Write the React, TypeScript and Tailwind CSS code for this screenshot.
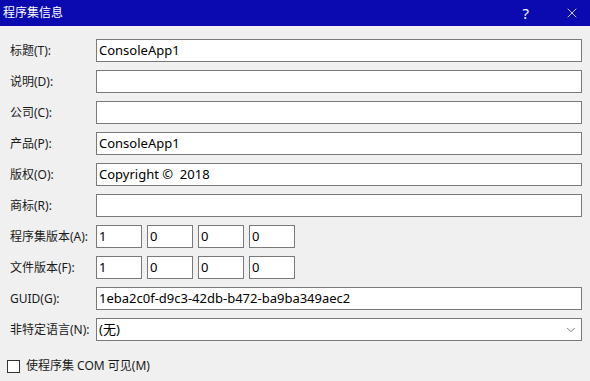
import { ChevronDown, X } from "lucide-react";

const FONT = "font-['Segoe_UI','Noto_Sans','Noto_Sans_CJK_SC',sans-serif]";

const fields: { label: string; value: string }[] = [
  { label: "标题(T):", value: "ConsoleApp1" },
  { label: "说明(D):", value: "" },
  { label: "公司(C):", value: "" },
  { label: "产品(P):", value: "ConsoleApp1" },
  { label: "版权(O):", value: "Copyright ©  2018" },
  { label: "商标(R):", value: "" },
];

function Label({ children }: { children: string }) {
  return <div className="w-[86px] shrink-0 text-[12px] text-[#1a1a1a] leading-none">{children}</div>;
}

function Box({ value, className = "" }: { value: string; className?: string }) {
  return (
    <div
      className={`h-[23px] border border-[#7a7a7a] bg-white px-[2px] flex items-center text-[13px] text-[#000] whitespace-pre ${className}`}
    >
      {value}
    </div>
  );
}

function VersionRow({ label }: { label: string }) {
  return (
    <div className="flex items-center h-[23px]">
      <Label>{label}</Label>
      <div className="flex gap-[5px]">
        <Box value="1" className="w-[46px]" />
        <Box value="0" className="w-[46px]" />
        <Box value="0" className="w-[46px]" />
        <Box value="0" className="w-[46px]" />
      </div>
    </div>
  );
}

export default function App() {
  return (
    <div className={`w-[590px] h-[381px] bg-[#f0f0f0] overflow-hidden flex flex-col ${FONT}`}>
      {/* Title bar */}
      <div className="h-[26px] bg-[#0a0ab0] flex items-center text-white shrink-0 pr-[10px]">
        <span className="pl-[3px] text-[12px] flex-1">程序集信息</span>
        <span className="text-[15px] leading-none">?</span>
        <X size={16} strokeWidth={1.2} className="ml-[35px]" />
      </div>

      {/* Form */}
      <div className="flex flex-col gap-[8px] pt-[13px] pl-[10px] pr-[8px]">
        {fields.map((f) => (
          <div key={f.label} className="flex items-center h-[23px]">
            <Label>{f.label}</Label>
            <Box value={f.value} className="flex-1" />
          </div>
        ))}
        <VersionRow label="程序集版本(A):" />
        <VersionRow label="文件版本(F):" />
        <div className="flex items-center h-[23px]">
          <Label>GUID(G):</Label>
          <Box value="1eba2c0f-d9c3-42db-b472-ba9ba349aec2" className="flex-1 text-[13.5px]" />
        </div>
        <div className="flex items-center h-[23px]">
          <Label>非特定语言(N):</Label>
          <div className="flex-1 h-[23px] border border-[#7a7a7a] bg-white pl-[2px] pr-[3px] flex items-center justify-between text-[13px] text-black">
            <span>(无)</span>
            <ChevronDown size={14} strokeWidth={1.2} className="text-[#444]" />
          </div>
        </div>
      </div>

      {/* Checkbox */}
      <div className="flex items-center gap-[6px] pl-[7px] mt-[16px]">
        <div className="w-[13px] h-[13px] border border-[#333] bg-white" />
        <span className="text-[12px] text-[#1a1a1a]">使程序集 COM 可见(M)</span>
      </div>
    </div>
  );
}
